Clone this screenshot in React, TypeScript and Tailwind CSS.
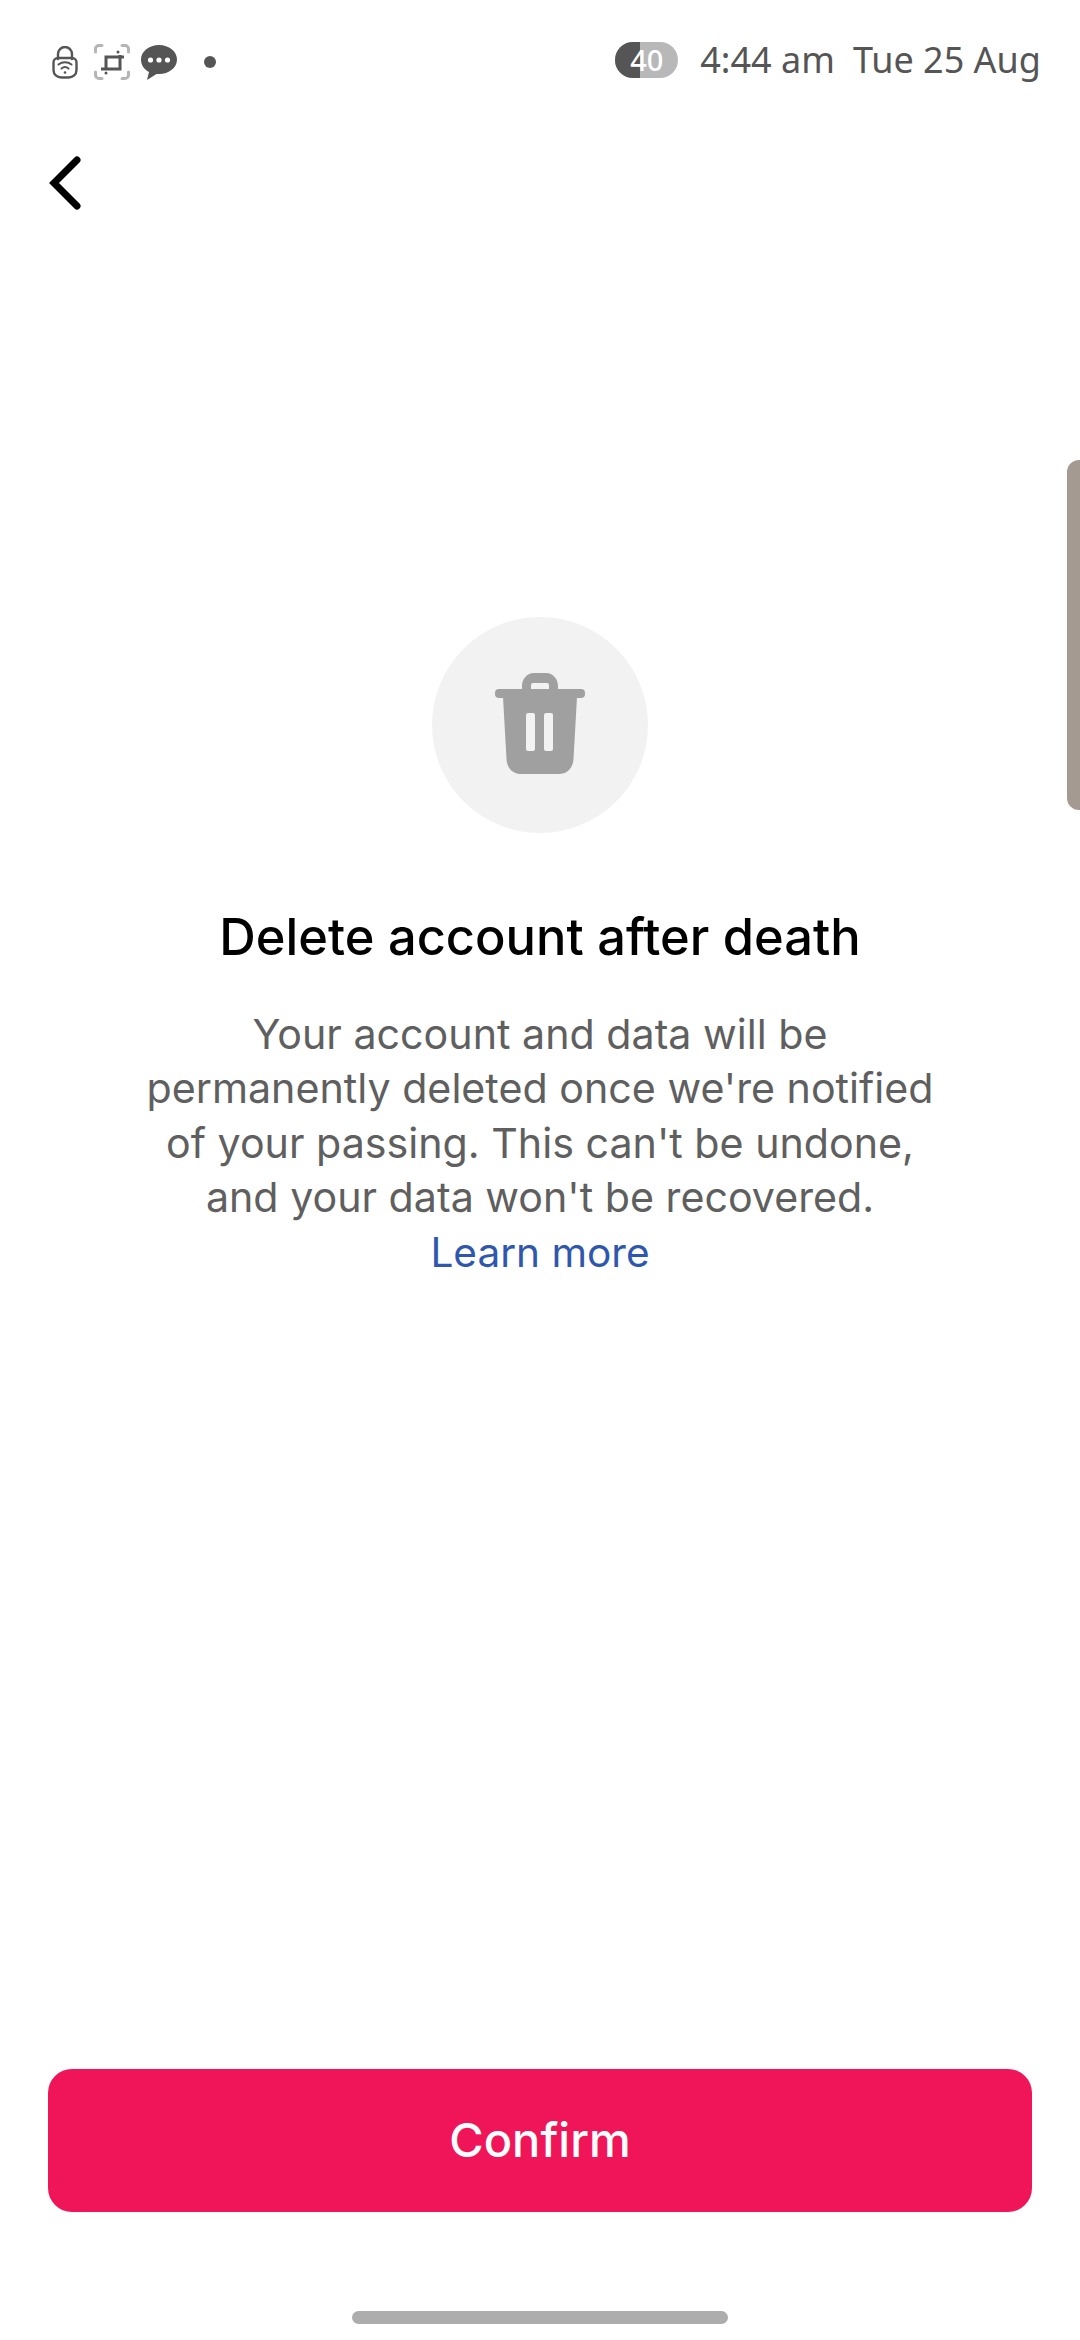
import React from 'react';

const LockWifiIcon = () => (
  <svg width="26" height="33" viewBox="0 0 26 33" fill="none" stroke="#555" strokeWidth="2.4" strokeLinecap="round">
    <path d="M6 13V8a7 7 0 0 1 14 0v5" />
    <path d="M1.500 16.500c0-2.500 2-4.500 4.500-4.500h14c2.500 0 4.500 2 4.500 4.500V24c0 4.500-3.500 7.500-8 7.500h-7c-4.500 0-8-3-8-7.500z" />
    <path d="M6.500 18.500c3.700-3 9.300-3 13 0M9.500 22.500c2-1.700 5-1.700 7 0" strokeWidth="2" />
    <circle cx="13" cy="26.500" r="1.300" fill="#555" stroke="none" />
  </svg>
);

const ScreenshotIcon = () => (
  <svg width="36" height="36" viewBox="0 0 36 36" fill="none" strokeWidth="3" strokeLinecap="round">
    <path d="M1.500 8V5a3.500 3.500 0 0 1 3.500-3.500h3M28 1.500h3A3.500 3.500 0 0 1 34.500 5v3M34.500 28v3a3.500 3.500 0 0 1-3.500 3.500h-3M8 34.500H5A3.500 3.500 0 0 1 1.500 31v-3" stroke="#b5b5b5" />
    <path d="M12 26V13h18M7 25h19V11" stroke="#555" strokeLinecap="butt" />
    <circle cx="24" cy="8" r="1.500" fill="#555" />
    <circle cx="12" cy="29" r="1.500" fill="#555" />
  </svg>
);

const MessageIcon = () => (
  <svg width="36" height="35" viewBox="0 0 36 35">
    <path d="M18 0C8 0 0 6.500 0 14.500c0 5.500 3.200 10 8 12.500l-2 8 9.500-6c.8.100 1.700.1 2.500.1 10 0 18-6.500 18-14.600S28 0 18 0z" fill="#555" />
    <circle cx="9.500" cy="15" r="2.600" fill="#fff" />
    <circle cx="18" cy="15" r="2.600" fill="#fff" />
    <circle cx="26.500" cy="15" r="2.600" fill="#fff" />
  </svg>
);

const TrashIcon = () => (
  <svg width="90" height="101" viewBox="0 0 90 101">
    <path d="M27 18V13C27 6 32 0 39 0h12c7 0 12 6 12 13v5h-9v-6a2 2 0 0 0-2-2H38a2 2 0 0 0-2 2v6z" fill="#a0a0a0" />
    <rect x="0" y="16" width="90" height="9" rx="4" fill="#a0a0a0" />
    <path fillRule="evenodd" d="M8 24h74l-3.500 62c-.6 9-6 15-15 15H26.500c-9 0-14.500-6-15-15zM33 40a2 2 0 0 0-2 2v34a2 2 0 0 0 2 2h5a2 2 0 0 0 2-2V42a2 2 0 0 0-2-2zM51 40a2 2 0 0 0-2 2v34a2 2 0 0 0 2 2h5a2 2 0 0 0 2-2V42a2 2 0 0 0-2-2z" fill="#a0a0a0" />
  </svg>
);

const App: React.FC = () => {
  return (
    <div className="relative flex h-[2340px] w-[1080px] flex-col overflow-hidden bg-white font-['Inter',sans-serif]">
      {/* status bar */}
      <div className="flex h-[80px] items-end justify-between pl-[52px] pr-[39px]">
        <div className="flex items-center">
          <LockWifiIcon />
          <div className="ml-[16px]"><ScreenshotIcon /></div>
          <div className="ml-[11px]"><MessageIcon /></div>
          <div className="ml-[27px] h-[12px] w-[12px] rounded-full bg-[#555555]" />
        </div>
        <div className="flex items-center font-['Noto_Sans',sans-serif] text-[36px] leading-[40px] text-[#555555]">
          <div className="relative mr-[22px] flex h-[36px] w-[63px] rounded-full bg-[#b8b8b8]">
            <div className="h-full w-[25px] rounded-l-full bg-[#555555]" />
            <span className="absolute inset-0 flex items-center justify-center text-[29px] leading-[36px] font-medium text-white">40</span>
          </div>
          <span>4:44 am</span>
          <span className="ml-[18px]">Tue 25 Aug</span>
        </div>
      </div>

      {/* back */}
      <div className="mt-[75px] pl-[47px]">
        <svg width="40" height="56" viewBox="0 0 40 56" fill="none" stroke="#000" strokeWidth="7" strokeLinecap="round">
          <path d="M30 5 7 28l23 23" />
        </svg>
      </div>

      {/* content */}
      <div className="mt-[406px] flex flex-col items-center">
        <div className="flex h-[216px] w-[216px] items-center justify-center rounded-full bg-[#f2f2f2] pb-[3px]">
          <TrashIcon />
        </div>
        <h1 className="mt-[72px] text-[50.6px] font-medium leading-[64px] text-black">Delete account after death</h1>
        <p className="mt-[38px] text-center text-[41.2px] leading-[54.4px] text-[#5f5f5f]">
          Your account and data will be<br />
          permanently deleted once we're notified<br />
          of your passing. This can't be undone,<br />
          and your data won't be recovered.<br />
          <span className="text-[40.6px] text-[#3057ae]">Learn more</span>
        </p>
      </div>

      {/* bottom */}
      <button className="absolute bottom-[128px] left-[48px] h-[143px] w-[984px] rounded-[24px] bg-[#ef1558] text-[47px] font-medium text-white">
        Confirm
      </button>
      <div className="absolute bottom-[16px] left-[352px] h-[13px] w-[376px] rounded-full bg-[#adadad]" />

      {/* edge panel handle */}
      <div className="absolute right-0 top-[460px] h-[350px] w-[13px] rounded-l-[12px] bg-[#a59a92]" />
    </div>
  );
};

export default App;
